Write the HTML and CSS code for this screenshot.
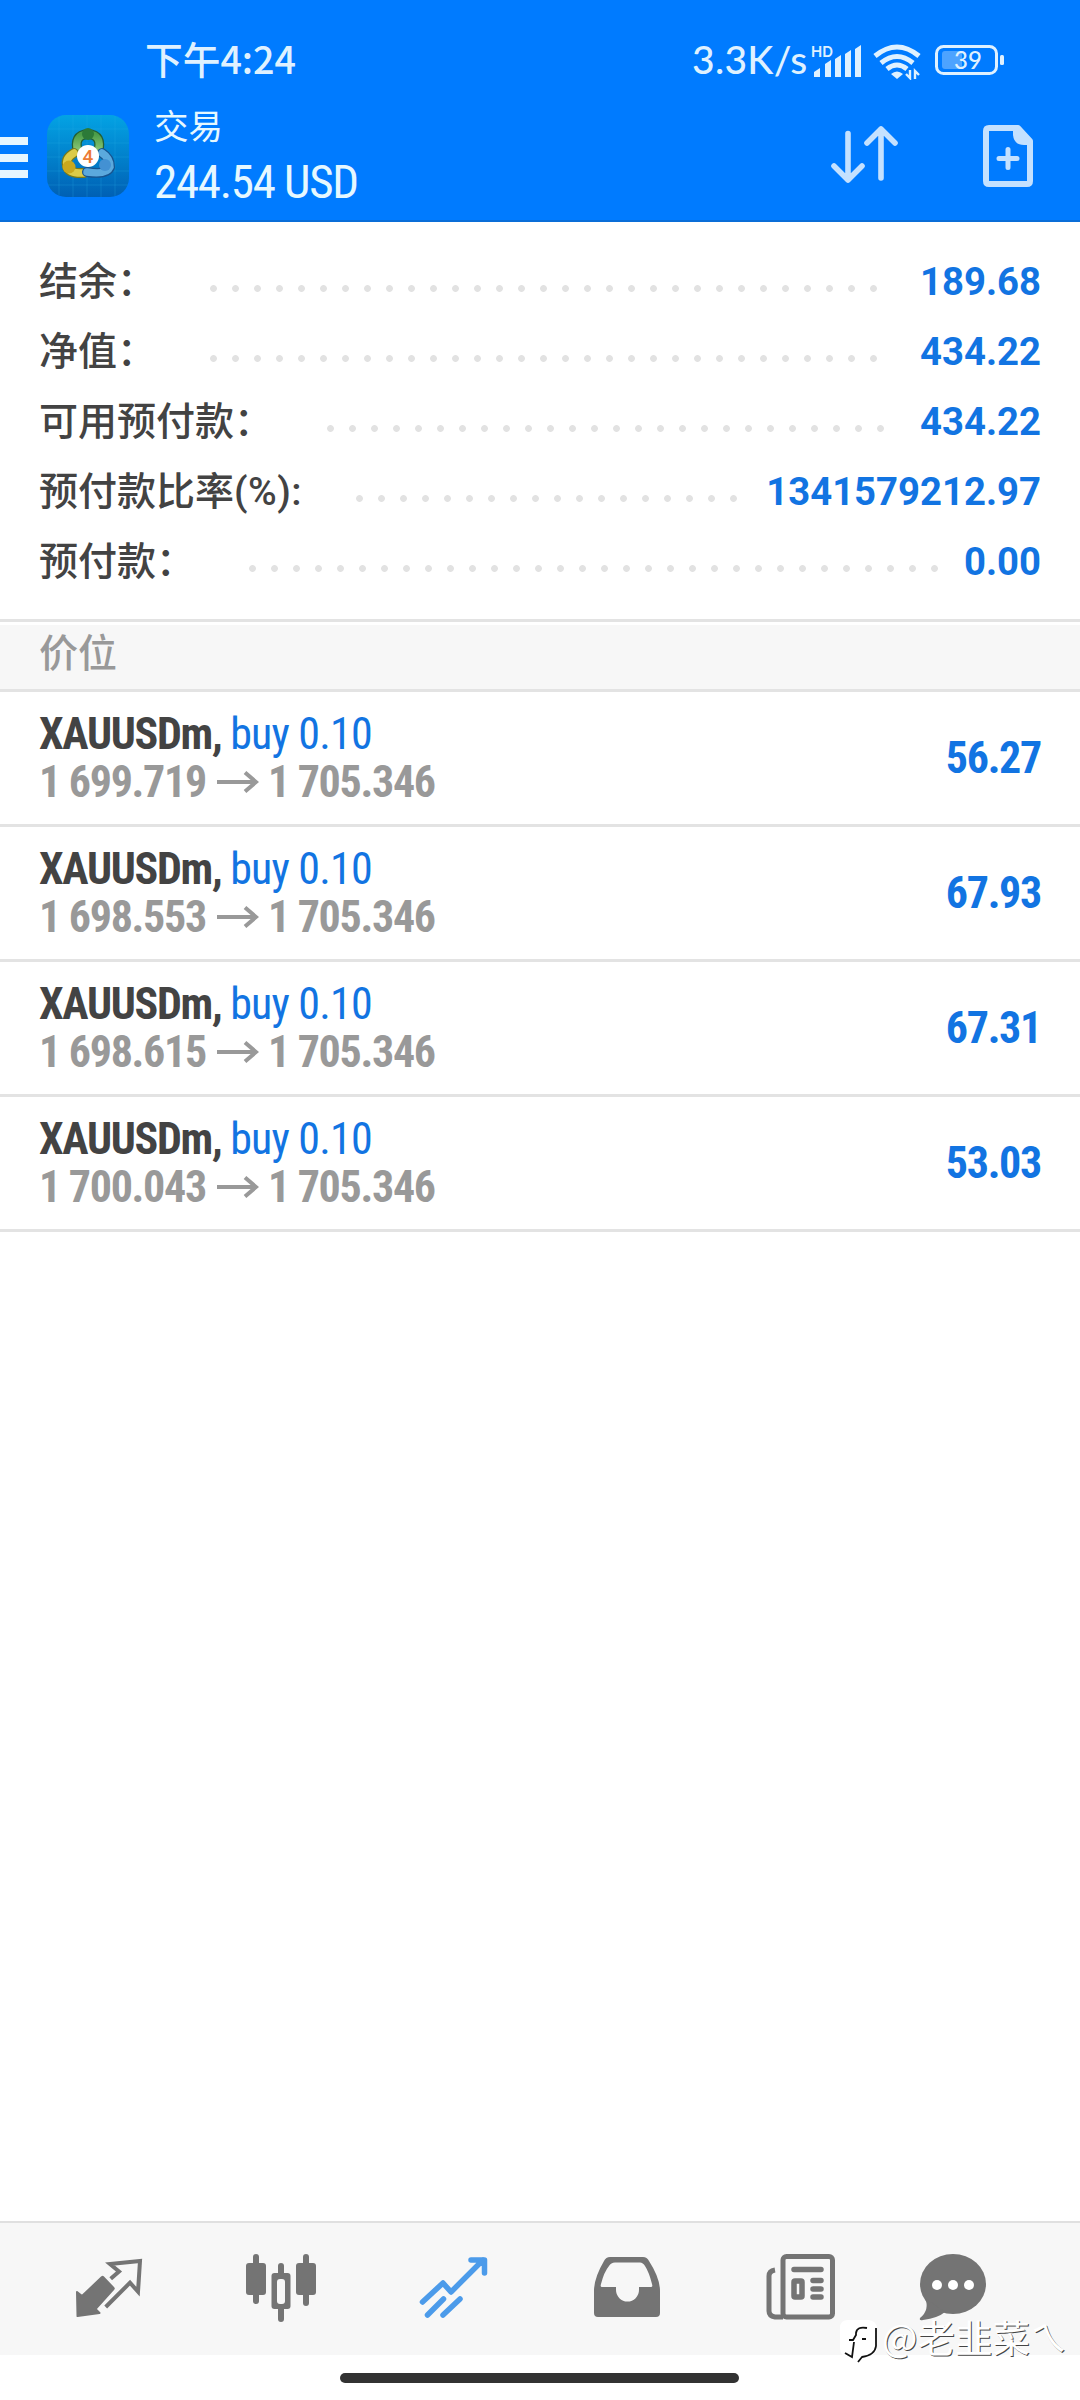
FILE: index.html
```html
<!DOCTYPE html>
<html lang="zh-CN">
<head>
<meta charset="utf-8">
<title>交易</title>
<link rel="stylesheet" href="styles.css">
</head>
<body>
<header class="header">
  <div class="status">
    <span class="clock">下午4:24</span>
    <span class="speed">3.3K/s</span>
    <svg class="signal" width="52" height="34" viewBox="0 0 52 34" fill="#dff1ff">
      <text class="hd" x="0" y="13">HD</text>
      <path d="M3 33v-5l6-4v9zM14 33V20l6-4v17zM24 33V15l6-4v22zM34 33V10l6-4v27zM44 33V5l6-4v32z"/>
    </svg>
    <svg class="wifi" width="48" height="36" viewBox="0 0 48 36" fill="none" stroke="#dff1ff" stroke-width="5">
      <path d="M2 12q22-18 44 0M8 19q16-13 32 0M14 25q10-8 20 0"/>
      <path d="M18 30q6-5 12 0l-6 5z" fill="#dff1ff" stroke="none"/>
      <path d="M37 26v8l-4-4M42 35v-8l4 4" stroke-width="2.4"/>
    </svg>
    <svg class="battery" width="70" height="30" viewBox="0 0 70 30">
      <rect x="1.5" y="1.5" width="60" height="27" rx="7" fill="none" stroke="#dff1ff" stroke-width="3"/>
      <rect x="7" y="6" width="20" height="18" rx="3" fill="#4da3ff"/>
      <rect x="65" y="10" width="4" height="10" rx="1.5" fill="#dff1ff"/>
      <text class="charge" x="19" y="24" fill="#dff1ff">39</text>
    </svg>
  </div>
  <div class="appbar">
    <svg width="28" height="42" viewBox="0 0 28 42" fill="#e6f6ff"><path d="M0 0h28v8H0zM0 17h28v8H0zM0 33h28v8H0z"/></svg>
    <svg class="logo" width="82" height="82" viewBox="0 0 82 82">
      <defs>
        <linearGradient id="sky" x1="0" y1="0" x2="0" y2="1"><stop offset="0" stop-color="#03a3e4"/><stop offset="1" stop-color="#0060b4"/></linearGradient>
        <linearGradient id="green" x1="0" y1="0" x2="0" y2="1"><stop offset="0" stop-color="#4a9c48"/><stop offset="1" stop-color="#8fca79"/></linearGradient>
      </defs>
      <rect width="82" height="82" rx="19" fill="url(#sky)"/>
      <path d="M12 2v78M26 0v82M40 0v82M54 0v82M68 1v80M1 14h80M0 28h82M0 42h82M0 56h82M1 70h80" stroke="#2ab4e6" stroke-opacity=".25"/>
      <g stroke-linecap="round" fill="none">
        <path d="M31 37q-5-17 10-18 15 1 10 18" stroke="#235f35" stroke-width="10"/>
        <path d="M31 37q-5-17 10-18 15 1 10 18" stroke="url(#green)" stroke-width="7.500"/>
        <path d="M27 38q-9 5-7 13t17 7" stroke="#7a7a18" stroke-width="10"/>
        <path d="M27 38q-9 5-7 13t17 7" stroke="#dccb48" stroke-width="7.500"/>
        <path d="M55 38q8 5 8 14-3 8-23 5" stroke="#17548f" stroke-width="10"/>
        <path d="M55 38q8 5 8 14-3 8-23 5" stroke="#5ba9dd" stroke-width="7.500"/>
      </g>
      <circle cx="41" cy="19" r="6" fill="#2c7a38"/>
      <circle cx="22" cy="52" r="6.5" fill="#c9a81e"/>
      <circle cx="58" cy="50" r="6" fill="#4391d3"/>
      <circle cx="41" cy="41" r="11" fill="#fff"/>
      <text class="four" x="35.500" y="48" fill="#ec7b35">4</text>
    </svg>
    <div class="titles">
      <div class="title">交易</div>
      <div class="profit">244.54 USD</div>
    </div>
    <svg class="sort" width="70" height="60" viewBox="0 0 70 60" fill="none" stroke="#c4e1ff" stroke-width="5.600" stroke-linecap="round" stroke-linejoin="round">
      <path d="M18 9.500V56M4 42l14 14 14-14M51 54V5M37 19L51 5l14 14"/>
    </svg>
    <svg width="50" height="62" viewBox="0 0 50 62" fill="none" stroke="#c4e1ff">
      <path d="M6 3h29l12 13v40q0 3-3 3H6q-3 0-3-3V6q0-3 3-3z" stroke-width="6" stroke-linejoin="round"/>
      <path d="M30 5v5q1 10 11 10h6V14L36 3z" fill="#c4e1ff" stroke="none"/>
      <path d="M25 24.500v18M16 33.500h18" stroke-width="5" stroke-linecap="round"/>
    </svg>
  </div>
</header>

<section class="summary">
  <div class="line"><span class="label">结余：</span><i class="dots" style="--n:31"></i><b class="amount">189.68</b></div>
  <div class="line"><span class="label">净值：</span><i class="dots" style="--n:31"></i><b class="amount">434.22</b></div>
  <div class="line"><span class="label">可用预付款：</span><i class="dots" style="--n:26"></i><b class="amount">434.22</b></div>
  <div class="line"><span class="label">预付款比率<span class="ratio">(%):</span></span><i class="dots" style="--n:18"></i><b class="amount">1341579212.97</b></div>
  <div class="line"><span class="label">预付款：</span><i class="dots" style="--n:32"></i><b class="amount">0.00</b></div>
</section>

<h2 class="section">价位</h2>

<main class="positions">
  <article class="position">
    <div><div class="deal"><b>XAUUSDm,</b> <span>buy 0.10</span></div>
    <div class="prices">1 699.719<svg class="arrow" width="42" height="22" viewBox="0 0 42 22"><path d="M0 11h38M28 1.500L39 11l-11 9.500"/></svg>1 705.346</div></div>
    <b class="gain">56.27</b>
  </article>
  <article class="position">
    <div><div class="deal"><b>XAUUSDm,</b> <span>buy 0.10</span></div>
    <div class="prices">1 698.553<svg class="arrow" width="42" height="22" viewBox="0 0 42 22"><path d="M0 11h38M28 1.500L39 11l-11 9.500"/></svg>1 705.346</div></div>
    <b class="gain">67.93</b>
  </article>
  <article class="position">
    <div><div class="deal"><b>XAUUSDm,</b> <span>buy 0.10</span></div>
    <div class="prices">1 698.615<svg class="arrow" width="42" height="22" viewBox="0 0 42 22"><path d="M0 11h38M28 1.500L39 11l-11 9.500"/></svg>1 705.346</div></div>
    <b class="gain">67.31</b>
  </article>
  <article class="position">
    <div><div class="deal"><b>XAUUSDm,</b> <span>buy 0.10</span></div>
    <div class="prices">1 700.043<svg class="arrow" width="42" height="22" viewBox="0 0 42 22"><path d="M0 11h38M28 1.500L39 11l-11 9.500"/></svg>1 705.346</div></div>
    <b class="gain">53.03</b>
  </article>
</main>

<nav class="tabs">
  <svg viewBox="0 0 70 70" fill="#747474" stroke="#747474" stroke-linejoin="round">
    <path d="M2 38l5 4L27 23q.5-.5 1 0l10.500 11q.5.500 0 1L20.500 55l4 4-22 3z" stroke-width="2"/>
    <path d="M35.700 24.700l8.300-7.200-9-7.500 30-3-2 30.700-8-9L30.700 53" fill="none" stroke-width="4" stroke-linejoin="miter"/>
  </svg>
  <svg viewBox="0 0 70 70" fill="#747474">
    <rect x="0" y="9" width="20" height="32" rx="3"/><rect x="7" y="0" width="6" height="50" rx="3"/>
    <rect x="50" y="9" width="20" height="32" rx="3"/><rect x="57" y="0" width="6" height="52" rx="3"/>
    <rect x="32" y="9" width="6" height="59" rx="3"/><rect x="25.500" y="19" width="19" height="36" rx="3"/>
    <rect x="31" y="25" width="8" height="25" rx="3" fill="#f7f7f7"/>
  </svg>
  <svg viewBox="0 0 70 70" fill="none" stroke="#4c9bea" stroke-width="5.500" stroke-linecap="round" stroke-linejoin="round">
    <path d="M3.500 48L24 29l8 9L64 6M52 6h13.500v13M8.500 61L24.500 45M24 61l17-16"/>
    <path d="M56 4h10v10z" fill="#4c9bea" stroke="none"/>
  </svg>
  <svg viewBox="0 0 70 70" fill="#747474" fill-rule="evenodd">
    <path d="M11 7q2-4 6-4h33q4 0 6 4 11 17 11 30v22q0 4-4 4H5q-4 0-4-4V37Q1 24 11 7zM16 12Q11 18 8 30q-1 3 1 3h14v3a11.500 11.500 0 0 0 23 0v-3h12q2 0 1-3-3-12-7-18-2-3.500-5-3.500H22q-4 0-6 3.500z"/>
  </svg>
  <svg viewBox="0 0 70 70" fill="none" stroke="#747474">
    <rect x="17" y="2.500" width="49.500" height="60.500" rx="3.500" stroke-width="5"/>
    <path d="M17 63H9q-6-1-6-6V22q0-5 6-6" stroke-width="5"/>
    <path d="M28 15.500h27M47 26.500h8M47 35h8M47 43h8" stroke-width="5.500" stroke-linecap="round"/>
    <rect x="28" y="27" width="8" height="16" rx="1" stroke-width="5.500"/>
  </svg>
  <svg viewBox="0 0 70 70" fill="#747474">
    <ellipse cx="34" cy="30" rx="33" ry="30"/><path d="M6 44q5 12-5 20-1 3 3 2 15-2 22-8z"/>
    <g fill="#fff"><circle cx="18" cy="31" r="5"/><circle cx="34" cy="31" r="5"/><circle cx="50" cy="31" r="5"/></g>
  </svg>
</nav>
<footer class="gesture"><div class="pill"></div></footer>

<div class="watermark">
  <svg width="38" height="44" viewBox="0 0 38 44">
    <path d="M8 0h20q9 0 9 10v17q0 9-12 10l-7 6-6-6H8q-8-1-8-9V8q0-8 8-8z" fill="#fff"/>
    <path d="M27 8q-10-2-11 5v2l-3 5H9M22 19h4M14 22l-2 15-7-4M36 8v18q-1 9-14 11l-4 5" fill="none" stroke="#111" stroke-width="1.800"/>
  </svg>
  <span>@老韭菜ㄟ</span>
</div>
</body>
</html>
```
FILE: styles.css
```css
* { box-sizing: border-box; }
body { margin: 0; width: 1080px; height: 2400px; overflow: hidden; position: relative; display: flex; flex-direction: column; background: #fff; font-family: Roboto, "Noto Sans CJK SC", sans-serif; color: #434343; }
svg { display: block; flex: none; }

.header { height: 222px; background: #007bff; border-bottom: 2px solid #0a6ed8; }
.status { height: 90px; padding: 30px 0 0 145px; display: flex; align-items: flex-start; color: #dff1ff; }
.clock { width: 547px; font: 500 37.700px/56px "Noto Sans CJK SC", sans-serif; white-space: nowrap; }
.speed { width: 119px; margin-top: 1px; font: 500 39px/56px Lato, sans-serif; letter-spacing: .3px; white-space: nowrap; }
.signal { margin-top: 14px; overflow: visible; }
.hd { font: 600 15px Inter, sans-serif; }
.wifi { margin: 14px 0 0 10px; }
.battery { margin: 15px 0 0 14px; }
.charge { font: 500 24px Lato, sans-serif; }
.four { font: 500 19px Roboto, sans-serif; }

.appbar { height: 130px; display: flex; align-items: flex-start; padding-top: 25px; }
.appbar > svg:first-child { margin-top: 22px; }
.logo { margin-left: 19px; }
.titles { width: 701px; padding-left: 25px; color: #e6f8ff; white-space: nowrap; }
.title { margin-top: -15px; font: 400 34.500px/48px "Noto Sans CJK SC", sans-serif; }
.profit { font: 400 47px/54px "Roboto Condensed", sans-serif; letter-spacing: -1.3px; margin-top: 7px; }
.sort { margin: 9px 83px 0 0; }
.appbar > svg:last-child { margin-top: 10px; }

.summary { height: 397px; padding: 23px 39px 0; }
.line { height: 70px; display: flex; align-items: flex-start; }
.label { margin-top: -2px; font: 500 39px/70px "Noto Sans CJK SC", sans-serif; white-space: nowrap; }
.ratio { font-family: Roboto, sans-serif; letter-spacing: .5px; }
.dots { width: calc(var(--n) * 22px - 15px); height: 7px; margin: 40px 0 0 54px; background: radial-gradient(circle at 3.5px 3.5px, #e2e2e2 3px, transparent 3.800px) 0 0 / 22px 7px; }
.amount { margin-left: auto; font-size: 38.300px; line-height: 70px; margin-top: 2px; color: #1274e2; }

.section { margin: 0; height: 73px; border-top: 3px solid #e3e3e3; border-bottom: 3px solid #e3e3e3; padding-left: 39px; background: #f7f7f7; box-shadow: inset 0 3px #fff; color: #999; font: 500 39px/56px "Noto Sans CJK SC", sans-serif; }

.positions { flex: 1; }
.position { height: 135px; border-bottom: 3px solid #e3e3e3; padding: 18px 39px 0 39px; display: flex; justify-content: space-between; font: 400 44px/48px "Roboto Condensed", sans-serif; letter-spacing: -1.3px; }
.deal span { color: #1274e2; letter-spacing: -.8px; }
.prices { display: flex; align-items: center; color: #999; font-weight: 700; }
.arrow { margin: 0 9px 0 11px; fill: none; stroke: #999; stroke-width: 4; }
.gain { margin-top: 24px; color: #1274e2; }

.tabs { height: 134px; border-top: 2px solid #e0e0e0; background: #f7f7f7; padding: 31px 0 0 75px; display: flex; }
.tabs svg { width: 70px; height: 70px; margin-right: 103px; }
.tabs svg:nth-child(2) { margin-left: -2px; margin-right: 104px; }
.tabs svg:nth-child(3) { margin-left: -1px; margin-right: 104px; }
.tabs svg:nth-child(5) { margin-right: 83px; }
.gesture { height: 45px; padding-top: 18px; }
.pill { width: 399px; height: 10px; margin: 0 0 0 340px; border-radius: 5px; background: #323232; }

.watermark { position: absolute; left: 840px; top: 2320px; display: flex; gap: 4px; color: #fff; }
.watermark span { font: 400 37.500px/44px "Noto Sans CJK SC", sans-serif; text-shadow: 1px 1px 0 #444; white-space: nowrap; margin-top: -6px; }
```
